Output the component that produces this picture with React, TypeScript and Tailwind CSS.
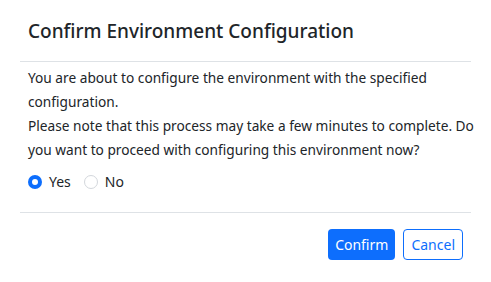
import { useState } from 'react';

export default function App() {
  const [choice, setChoice] = useState<'yes' | 'no'>('yes');

  const radio = (value: 'yes' | 'no', label: string) => {
    const checked = choice === value;
    return (
      <label className="flex cursor-pointer items-center gap-[7px]">
        <input
          type="radio"
          name="proceed"
          checked={checked}
          onChange={() => setChoice(value)}
          className="sr-only"
        />
        <span
          className={
            checked
              ? 'flex h-[14px] w-[14px] items-center justify-center rounded-full bg-[#0d6efd]'
              : 'h-[14px] w-[14px] rounded-full border border-[#d3d7dc] bg-white'
          }
        >
          {checked && <span className="h-[6px] w-[6px] rounded-full bg-white" />}
        </span>
        <span className="text-[14px]">{label}</span>
      </label>
    );
  };

  return (
    <div className="h-[282px] w-[491px] bg-white px-5 pt-[19px] font-['Segoe_UI','Noto_Sans',sans-serif] text-[#212529]">
      {/* Header */}
      <div className="border-b border-[#dee2e6] px-2 pb-[18px]">
        <h5 className="text-[19px] leading-[24px] font-medium">Confirm Environment Configuration</h5>
      </div>

      {/* Body */}
      <div className="border-b border-[#dee2e6] px-2 pt-1 pb-[18px] text-[13.7px] leading-[24px]">
        <p className="whitespace-nowrap">
          You are about to configure the environment with the specified
          <br />
          configuration.
          <br />
          Please note that this process may take a few minutes to complete. Do
          <br />
          you want to proceed with configuring this environment now?
        </p>
        <div className="mt-2 flex items-center gap-[13px]">
          {radio('yes', 'Yes')}
          {radio('no', 'No')}
        </div>
      </div>

      {/* Footer */}
      <div className="flex justify-end gap-2 px-2 pt-4">
        <button
          type="button"
          className="h-[31px] rounded-[4px] bg-[#0d6efd] px-[7px] text-[14px] text-white"
        >
          Confirm
        </button>
        <button
          type="button"
          className="h-[31px] rounded-[4px] border border-[#0d6efd] bg-white px-[7px] text-[14px] text-[#0d6efd]"
        >
          Cancel
        </button>
      </div>
    </div>
  );
}
